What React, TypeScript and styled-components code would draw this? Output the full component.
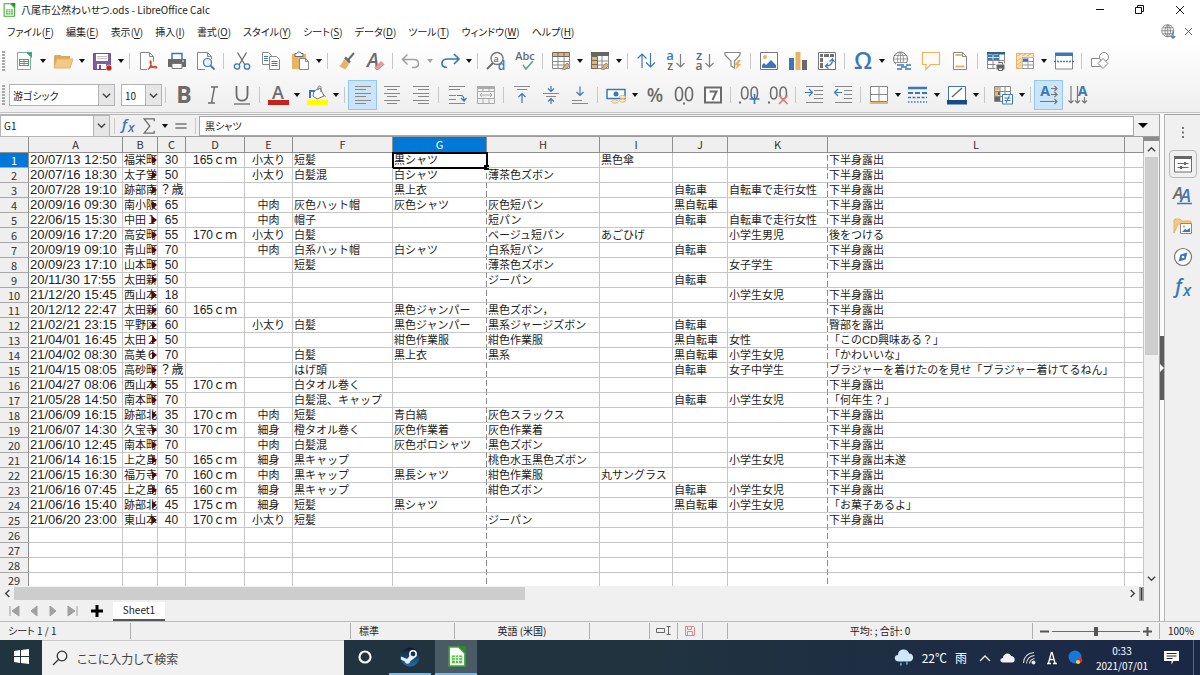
import React from "react";
import styled, { createGlobalStyle, css } from "styled-components";

const UI_FONT = '"Noto Sans CJK JP", "Noto Sans", sans-serif';
const CELL_FONT = '"Liberation Sans", "Noto Sans CJK JP", sans-serif';

const Global = createGlobalStyle`
  * { box-sizing: border-box; }
  html, body { margin: 0; padding: 0; }
  body { font-family: ${UI_FONT}; font-size: 10px; color: #222; background: #f0f0f0; }
  button, input, select { font: inherit; color: inherit; margin: 0; padding: 0; border: 0; background: none; outline: none; }
`;

/* ---------- window frame ---------- */

const Window = styled.div`
  display: flex;
  flex-direction: column;
  height: 100vh;
  overflow: hidden;
  background: #f0f0f0;
  font-feature-settings: "palt";
`;

const Top = styled.header`
  flex: none;
  background: linear-gradient(#fff 0, #fff 42px, #efefef 111px);
  border-bottom: 1px solid #c4c4c4;
`;

const TitleBar = styled.div`
  display: flex;
  align-items: center;
  height: 20px;
  padding-left: 2px;
  gap: 5px;
`;

const Title = styled.h1`
  margin: 0;
  flex: 1;
  font-size: 10px;
  font-weight: 400;
  line-height: 20px;
`;

const CaptionButton = styled.button`
  width: 40px;
  height: 20px;
  margin-left: -5px;
  display: grid;
  place-items: center;
`;

const MenuBar = styled.nav`
  display: flex;
  align-items: center;
  height: 23px;
  padding: 0 4px 0 7px;
  gap: 12px;
`;

const MenuItem = styled.button`
  line-height: 20px;
  white-space: nowrap;
  u { text-underline-offset: 2px; }
`;

const MenuEnd = styled.div`
  display: flex;
  align-items: center;
  gap: 6px;
  margin-left: auto;
  button { display: grid; place-items: center; }
`;

const Toolbar = styled.div<{ $tall?: boolean }>`
  display: flex;
  align-items: center;
  height: ${(p) => (p.$tall ? 34 : 35)}px;
  overflow: hidden;
`;

const Grip = styled.span`
  flex: none;
  width: 3px;
  height: 20px;
  margin: 0 4px 0 2px;
  background: repeating-linear-gradient(#a8a8a8 0 2px, transparent 2px 3px);
`;

const ToolButton = styled.button<{ $active?: boolean }>`
  flex: none;
  display: grid;
  place-items: center;
  width: 29px;
  height: 30px;
  ${(p) =>
    p.$active &&
    css`
      background: #cce4f7;
      border: 1px solid #92c7f0;
    `}
`;

const DropButton = styled.button<{ $muted?: boolean }>`
  flex: none;
  width: 10px;
  height: 30px;
  display: grid;
  place-items: center;
  &::after {
    content: "";
    border: 3px solid transparent;
    border-top: 4px solid ${(p) => (p.$muted ? "#a5a5a5" : "#111")};
    border-bottom: 0;
  }
`;

const Separator = styled.span`
  flex: none;
  width: 1px;
  height: 16px;
  margin: 0 3px;
  background: #c8c8c8;
`;

const Combo = styled.label<{ $width: number; $gap?: number }>`
  flex: none;
  display: flex;
  position: relative;
  width: ${(p) => p.$width}px;
  height: 22px;
  margin-right: ${(p) => p.$gap ?? 0}px;
  border: 1px solid #b4b4b4;
  background: #fff;
  select, input {
    flex: 1;
    min-width: 0;
    appearance: none;
    padding-left: 3px;
  }
`;

const ComboArrow = styled.span`
  flex: none;
  width: 16px;
  display: grid;
  place-items: center;
  background: #e6e6e6;
  border-left: 1px solid #b4b4b4;
  pointer-events: none;
`;

/* ---------- work area ---------- */

const Work = styled.main`
  flex: 1;
  min-height: 0;
  display: flex;
  border-top: 1px solid #f4f4f4;
`;

const Document = styled.section`
  flex: 1;
  min-width: 0;
  display: flex;
  flex-direction: column;
`;

const FormulaBar = styled.div`
  flex: none;
  display: flex;
  align-items: center;
  height: 23px;
  border-top: 1px solid #b4b4b4;
  border-bottom: 1px solid #9c9c9c;
`;

const FormulaTool = styled.button<{ $width: number }>`
  flex: none;
  width: ${(p) => p.$width}px;
  height: 20px;
  display: grid;
  place-items: center;
`;

const FormulaInput = styled.input`
  && {
    flex: 1;
    min-width: 0;
    height: 20px;
    padding-left: 5px;
    border: 1px solid #a8a8a8;
    background: #fff;
  }
`;

const FormulaExpand = styled.button`
  flex: none;
  width: 25px;
  height: 20px;
  padding-left: 4px;
  &::after {
    content: "";
    display: block;
    width: 0;
    border: 5px solid transparent;
    border-top: 5px solid #000;
    border-bottom: 0;
  }
`;

const SheetRow = styled.div`
  flex: 1;
  min-height: 0;
  display: flex;
`;

const SheetView = styled.div`
  flex: 1;
  min-width: 0;
  overflow: hidden;
  background: #fff;
`;

const Grid = styled.table`
  width: 100%;
  table-layout: fixed;
  border-collapse: separate;
  border-spacing: 0;
  font-family: ${CELL_FONT};
  font-feature-settings: normal;
`;

const Col = styled.col<{ $width?: number; $break?: boolean }>`
  ${(p) => p.$width && `width: ${p.$width}px;`}
  ${(p) =>
    p.$break &&
    css`
      background: repeating-linear-gradient(#8a8a8a 0 6px, transparent 6px 9px) right top / 1px 100% no-repeat;
    `}
`;

const headCell = css<{ $selected?: boolean }>`
  padding: 0;
  font-family: ${UI_FONT};
  font-size: 11px;
  font-weight: 400;
  text-align: center;
  color: ${(p) => (p.$selected ? "#fff" : "#333")};
  background: ${(p) => (p.$selected ? "#0078d7" : "#efefef")};
  border-right: 1px solid #8f8f8f;
  border-bottom: 1px solid #8f8f8f;
`;

const ColumnHead = styled.th<{ $selected?: boolean }>`
  ${headCell}
  height: 16px;
  line-height: 15px;
`;

const RowHead = styled.th<{ $selected?: boolean }>`
  ${headCell}
  height: 15px;
  line-height: 14px;
  border-bottom-color: #a8a8a8;
`;

const Cell = styled.td<{ $center?: boolean; $size?: number; $break?: boolean; $current?: boolean }>`
  position: relative;
  height: 15px;
  padding: 0 0 0 ${(p) => (p.$center ? 0 : 1)}px;
  font-size: ${(p) => p.$size ?? 11}px;
  line-height: 14px;
  white-space: nowrap;
  overflow: ${(p) => (p.$current ? "visible" : "hidden")};
  text-align: ${(p) => (p.$center ? "center" : "left")};
  border-right: 1px solid ${(p) => (p.$break ? "transparent" : "#c6c6c6")};
  border-bottom: 1px solid #c6c6c6;
  ${(p) =>
    p.$current &&
    css`
      outline: 2px solid #000;
      outline-offset: -1px;
      &::after {
        content: "";
        position: absolute;
        right: -3px;
        bottom: -3px;
        width: 5px;
        height: 5px;
        background: #000;
      }
    `}
`;

const Overflow = styled.span`
  position: absolute;
  right: 0;
  top: 3px;
  border: 4px solid transparent;
  border-left: 5px solid #4a0a0a;
  border-right: 0;
`;

const VScroll = styled.div`
  flex: none;
  display: flex;
  flex-direction: column;
  align-items: center;
  width: 15px;
  border-top: 4px solid #8c8c8c;
  background: #f0f0f0;
  button { width: 15px; height: 16px; display: grid; place-items: center; }
`;

const VTrack = styled.div`
  flex: 1;
  width: 13px;
`;

const VThumb = styled.div`
  height: 48%;
  background: #cdcdcd;
`;

const HScroll = styled.div`
  flex: none;
  display: flex;
  align-items: center;
  height: 15px;
  padding: 0 15px 0 0;
  background: #f0f0f0;
  button { width: 14px; height: 13px; display: grid; place-items: center; }
`;

const HTrack = styled.div`
  flex: 1;
  height: 13px;
`;

const HThumb = styled.div`
  width: 46%;
  height: 13px;
  background: #cdcdcd;
`;

const SplitHandle = styled.span`
  width: 5px;
  height: 14px;
  border: 1px solid #9a9a9a;
  background: #333;
  border-width: 1px 2px;
`;

const SheetTabs = styled.div`
  flex: none;
  display: flex;
  align-items: center;
  height: 20px;
  padding-left: 5px;
  button { display: grid; place-items: center; width: 19px; height: 19px; }
`;

const SheetTab = styled.button`
  && {
    width: 52px;
    background: #fff;
    border-bottom: 2px solid #555;
    line-height: 16px;
  }
`;

const AddSheet = styled.button`
  && { width: 32px; }
`;

const Splitter = styled.div`
  flex: none;
  width: 6px;
  display: flex;
  flex-direction: column;
  justify-content: center;
  border-left: 1px solid #a2a2a2;
  border-right: 1px solid #b4b4b4;
  background: #fafafa;
`;

const SplitterKnob = styled.button`
  && {
    height: 64px;
    background: #5c5c5c;
    display: grid;
    place-items: center;
  }
`;

const SideBar = styled.aside`
  flex: none;
  width: 35px;
  display: flex;
  flex-direction: column;
  align-items: center;
  gap: 3px;
  padding-top: 2px;
  border-top: 1px solid #a2a2a2;
`;

const SideButton = styled.button<{ $active?: boolean; $first?: boolean }>`
  display: grid;
  place-items: center;
  width: 28px;
  height: ${(p) => (p.$first ? 30 : 28)}px;
  ${(p) =>
    p.$active &&
    css`
      border: 1px solid #b8b8b8;
      border-radius: 4px;
    `}
`;

/* ---------- status bar ---------- */

const StatusBar = styled.footer`
  flex: none;
  display: flex;
  align-items: center;
  height: 19px;
  border-top: 1px solid #bcbcbc;
`;

const StatusField = styled.div<{ $grow?: number; $width?: number; $center?: boolean }>`
  flex: ${(p) => (p.$grow ? `${p.$grow} 1 0` : "none")};
  ${(p) => p.$width && `width: ${p.$width}px;`}
  height: 16px;
  display: flex;
  align-items: center;
  justify-content: ${(p) => (p.$center ? "center" : "flex-start")};
  padding-left: ${(p) => (p.$center ? 0 : 8)}px;
  border-right: 1px solid #b0b0b0;
  line-height: 16px;
  white-space: nowrap;
  &:last-child { border-right: 0; }
`;

const ZoomSlider = styled.input`
  && {
    appearance: none;
    width: 88px;
    height: 12px;
    margin: 0 3px;
    background: linear-gradient(#6a6a6a, #6a6a6a) center / 100% 1px no-repeat;
  }
  &::-webkit-slider-thumb {
    appearance: none;
    width: 4px;
    height: 9px;
    background: #555;
  }
`;

/* ---------- task bar ---------- */

const TaskBar = styled.div`
  flex: none;
  display: flex;
  align-items: stretch;
  height: 35px;
  color: #fff;
  background: linear-gradient(90deg, #20343f 0%, #20333f 55%, #1c2a45 85%, #1b2845 100%);
`;

const TaskButton = styled.button<{ $open?: boolean; $active?: boolean }>`
  flex: none;
  width: 42px;
  display: grid;
  place-items: center;
  background: ${(p) => (p.$active ? "#4b5b65" : "none")};
  border-bottom: 2px solid ${(p) => (p.$open ? "#76b9ed" : "transparent")};
`;

const Running = styled.div`
  display: flex;
  gap: 4px;
  padding-left: 3px;
`;

const SearchBox = styled.label`
  flex: none;
  width: 302px;
  display: flex;
  align-items: center;
  gap: 9px;
  padding-left: 10px;
  background: #f1f1f1;
  border-top: 1px solid #c9c9c9;
  input { flex: 1; min-width: 0; font-size: 12px; color: #333; }
  input::placeholder { color: #444; opacity: 1; }
`;

const Tray = styled.div`
  display: flex;
  align-items: center;
  margin-left: auto;
  padding-right: 3px;
`;

const TrayButton = styled.button<{ $width: number }>`
  flex: none;
  width: ${(p) => p.$width}px;
  height: 35px;
  display: grid;
  place-items: center;
`;

const Weather = styled.button`
  display: flex;
  align-items: center;
  gap: 8px;
  height: 35px;
  margin-right: 7px;
  font-size: 12px;
`;

const Clock = styled.button`
  width: 68px;
  line-height: 15px;
  text-align: center;
  span { display: block; }
`;

const ShowDesktop = styled.button`
  width: 4px;
  height: 35px;
  && { margin-left: 7px; border-left: 1px solid #5a667a; }
`;

/* ---------- drawings ---------- */

const G = "#6b6b6b";
const B = "#3c78b8";
const O = "#e8b464";

type SvgProps = { size?: number; children: React.ReactNode; box?: number };
const Svg = ({ size = 20, box = 20, children }: SvgProps) => (
  <svg width={size} height={size} viewBox={`0 0 ${box} ${box}`} overflow="visible" fill="none" stroke={G} strokeWidth={1} aria-hidden="true">
    {children}
  </svg>
);

type GlyphProps = { x: number; y: number; size: number; fill?: string; weight?: number; italic?: boolean; children: string };
const Glyph = ({ x, y, size, fill = G, weight = 400, italic, children }: GlyphProps) => (
  <text
    x={x}
    y={y}
    fontSize={size}
    fontWeight={weight}
    fill={fill}
    stroke="none"
    textAnchor="middle"
    fontStyle={italic ? "italic" : "normal"}
    fontFamily='"Open Sans", "Noto Sans", sans-serif'
  >
    {children}
  </text>
);

const Chevron = ({ d = "M1 3l4 4 4-4", size = 9 }: { d?: string; size?: number }) => (
  <svg width={size} height={size} viewBox="0 0 10 10" fill="none" stroke="#444" strokeWidth={1.6} aria-hidden="true">
    <path d={d} />
  </svg>
);

const Lines = ({ rows, color = "#888" }: { rows: [number, number, number][]; color?: string }) => (
  <path d={rows.map(([x1, x2, y]) => `M${x1} ${y}H${x2}`).join("")} stroke={color} />
);

const icons: Record<string, React.ReactNode> = {
  new: (<><path d="M3.5 1.500h9l4 4v13h-13z" fill="#fff" stroke="#7fae98" /><path d="M12 1h6v6z" fill="#4d9c86" stroke="none" /><path d="M5 8h10v7H5z" fill="#5b9a7c" stroke="none" /><path d="M6 9.500h3.500M10.500 9.500h3.500M6 11.500h3.500M10.500 11.500h3.500M6 13.500h3.500M10.500 13.500h3.500" stroke="#fff" /></>),
  open: (<><path d="M1 16V5l1-1h5l2 1h8v3H5z" fill="#d9a962" stroke="none" /><path d="M1 17L4 8h16l-3 9z" fill="#f2c987" stroke="#e4b469" /></>),
  save: (<><path d="M1.500 2.500h17v16h-17z" fill="#7a62a0" stroke="#6a5290" /><path d="M4 3h12v7H4z" fill="#fff" stroke="none" /><path d="M5 5.500h10M5 7.500h10" stroke="#c9c0d9" /><path d="M5 13h9v5H5z" fill="#fff" stroke="none" /><path d="M7 14h2v4H7z" fill="#6a5290" stroke="none" /><circle cx="17" cy="17" r="3" fill="#c9211e" stroke="#fff" strokeWidth=".6" /></>),
  pdf: (<><path d="M9 18.500H2.500v-17h9l4 4v5" fill="#fff" stroke="#888" /><path d="M11.500 1.500v4h4" stroke="#888" /><path d="M10 18.500c2-2 3.500-5 3-8-.5-1.500-1.500 0-.5 2.500s3 4 5.500 4c1.500 0 1-2-2-1.500s-5 1.500-6 3z" stroke="#d0472c" strokeWidth="1.200" /></>),
  print: (<><path d="M5 8V2.500h10V8" fill="#fff" stroke={B} strokeWidth="1.500" /><path d="M1 8h18v8H1z" fill="#6a6a6a" stroke="none" /><path d="M5 12.500h10v5H5z" fill="#fff" stroke="#777" /><path d="M15 10h2" stroke="#fff" /></>),
  preview: (<><path d="M9 18.500H1.500v-17h10l4 4V8" fill="#fff" stroke="#888" /><path d="M11.500 1.500v4h4" stroke="#888" /><circle cx="11.500" cy="11.500" r="4" fill="#eaf2fa" stroke={B} strokeWidth="1.200" /><path d="M14.500 14.500l4 4" stroke={B} strokeWidth="1.800" /></>),
  cut: (<><path d="M5.500 1.500L13 14M14.500 1.500L7 14" strokeWidth="1.300" /><circle cx="5" cy="15.500" r="2.700" stroke={B} strokeWidth="1.300" /><circle cx="15" cy="15.500" r="2.700" stroke={B} strokeWidth="1.300" /></>),
  copy: (<><path d="M1.500 1.500h6l3 3v9h-9z" fill="#fff" stroke="#888" /><path d="M3 5.500h4M3 7.500h4M3 9.500h4" stroke={B} /><path d="M8.500 5.500h7l3 3v10h-10z" fill="#fff" stroke="#888" /><path d="M10.500 10.500h6M10.500 12.500h6M10.500 14.500h6" stroke={B} /></>),
  paste: (<><path d="M2 3h14v15H2z" fill={O} stroke="none" /><path d="M5 2.500h2l1-1.500h2l1 1.500h2v3H5z" fill="#fff" stroke={G} /><path d="M9.500 7.500h6l3 3v8h-9z" fill="#fff" stroke="#888" /><path d="M15.500 7.500v3h3" stroke="#888" /></>),
  brush: (<><path d="M18 2l-6 7" strokeWidth="2" /><path d="M9 6.500l5 5" strokeWidth="2.500" /><path d="M8 8l5 4.500c-1 3-3 5-4 6L3 15c2-1 4-4 5-7z" fill={O} stroke="none" /></>),
  clear: (<><Glyph x={8} y={16} size={20} weight={600} italic>A</Glyph><path d="M10 16.500l6-6 3 3-6 5h-2z" fill="#e79a9e" stroke="#d88" /></>),
  undo: (<path d="M6.500 3.500l-5 5 5 5M2 8.500h11c6 0 6 8 0 8h-2" stroke="#a0a0a0" strokeWidth="1.500" />),
  redo: (<path d="M14 3l5 5-5 5M18 8H8c-8 0-8 8.500-1 8.500" stroke={B} strokeWidth="1.700" />),
  find: (<><circle cx="11" cy="7.500" r="6" stroke="#777" strokeWidth="1.400" /><path d="M7 12l-6 6" strokeWidth="2" /><Glyph x={10} y={10.500} size={9} weight={600}>a</Glyph><Glyph x={15.500} y={19} size={12} weight={600} fill={B}>d</Glyph></>),
  spell: (<><Glyph x={10} y={9} size={11} weight={600}>Abc</Glyph><path d="M8 14l3 4 7-8" stroke="#5aa583" strokeWidth="1.600" /></>),
  rows: (<><path d="M1.500 2.500h17v15h-17zM1.500 10.500h17M1.500 14h17M7 6v11.500M13 6v11.500" fill="#fff" stroke="#8a8a8a" /><path d="M1.500 1.500h17v4h-17z" fill={O} stroke={G} /><path d="M7 2v3M13 2v3" stroke={G} /><path d="M11 18l5-6 3 2.500-5 4z" fill={O} stroke="#888" /></>),
  cols: (<><path d="M1.500 2.500h17v15h-17zM12 2.500v15M1.500 10h17M1.500 14h17" fill="#fff" stroke="#8a8a8a" /><path d="M1 1h18v4H1z" fill="#666" stroke="none" /><path d="M1.500 5.500h6v4h-6zM1.500 9.500h6v4h-6zM1.500 13.500h6v4h-6z" fill={O} /><path d="M11 18l5-6 3 2.500-5 4z" fill={O} stroke="#888" /></>),
  sort: (<path d="M6 17V3M1.500 7.500L6 3l4.500 4.500M14.500 2v14M10 11.500l4.500 4.500 4.500-4.500" stroke={B} strokeWidth="1.200" />),
  az: (<><Glyph x={5} y={9} size={13} weight={600} fill={B}>a</Glyph><Glyph x={5} y={19} size={12} weight={600}>z</Glyph><path d="M15.500 3v13M11.500 12l4 4 4-4" stroke="#808080" strokeWidth="1.200" /></>),
  za: (<><Glyph x={5} y={9} size={13} weight={600} fill={B}>z</Glyph><Glyph x={5} y={19} size={12} weight={600}>a</Glyph><path d="M15.500 3v13M11.500 12l4 4 4-4" stroke="#808080" strokeWidth="1.200" /></>),
  filter: (<><path d="M2 1.500h15v2.500l-5.500 6v7l-3.500-2V10L2 4z" fill="#fff" stroke="#888" strokeWidth="1.200" /><path d="M15 9l-4 5.500h3L12 19l6.500-6h-3L18 9z" fill={O} stroke="none" /></>),
  image: (<><path d="M1.500 1.500h17v17h-17z" fill="#fff" stroke="#777" /><circle cx="6" cy="6" r="2" fill={O} stroke="none" /><path d="M3 17v-3l2-2 2 2 5-5 5 5v3z" fill={B} stroke="none" /></>),
  chart: (<><path d="M1 7h5v12H1z" fill={B} stroke="none" /><path d="M7.500 1h5v18h-5z" fill={O} stroke="none" /><path d="M14 9h5v10h-5z" fill={G} stroke="none" /></>),
  pivot: (<><path d="M1.500 1.500h17v17h-17z" fill="#fff" stroke="#777" /><path d="M3 3h3v3H3zM7 3h5v3H7zM13 3h4v3h-4zM3 7h3v4H3zM3 12h3v5H3z" fill="#707070" stroke="none" /><path d="M8.500 15c5 0 7-2 7-6M12.500 10.500l3-2.500 2 3M11 12.500l-2.500 2.500 3 2.500" stroke={B} strokeWidth="1.200" /></>),
  omega: (<Glyph x={10} y={18} size={23} weight={600} fill={B}>Ω</Glyph>),
  link: (<><circle cx="8.500" cy="8" r="7" stroke="#777" /><path d="M2 8h13M3 4.500h11M3 11.500h11M8.500 1v14M8.500 1c-4 3-4 11 0 14M8.500 1c4 3 4 11 0 14" stroke="#888" strokeWidth=".8" /><path d="M4 12h16v8H4z" fill="#f6f6f6" stroke="none" /><path d="M5 14h5l2 0M14 14h5M5 18h5M13 18h6M9 16h6" stroke={B} strokeWidth="1.600" /></>),
  comment: (<path d="M1.500 1.500h17v12h-9l-4.500 5v-5H1.500z" fill="#fffaf2" stroke={O} strokeWidth="1.200" />),
  headfoot: (<><path d="M3.500 1.500h9l4 4v13h-13z" fill="#fff" stroke="#888" /><path d="M12.500 1.500v4h4" stroke="#888" /><path d="M5.500 4h6M5.500 15.500h9" stroke={O} strokeWidth="2" /></>),
  printarea: (<><path d="M1.500 1.500h17v16h-17zM7 1.500v16M13 1.500v16M1.500 9.500h17M1.500 13.500h17" fill="#fff" stroke="#888" /><path d="M1 1h18v2.500H1z" fill="#315f92" stroke="none" /><path d="M2 4h11v5H2z" fill={B} stroke="none" /><path d="M2 6.500h11M7 4v5" stroke="#cfe0f1" /><path d="M10 13h9v6h-9z" fill="#666" stroke="#fff" /><path d="M12.500 11.500h4v2M12.500 17h4v2.500h-4z" stroke="#666" fill="#fff" /></>),
  freeze: (<><path d="M1.500 2.500h17v15h-17zM7 2.500v15M13 6v11.500M1.500 10.500h17M1.500 14h17" fill="#fff" stroke="#999" /><path d="M1.500 2.500h17v4H7v11H1.500z" fill="#fbe6c4" stroke={O} /><path d="M2 5l4-2M7 5l4-2M12 5l4-2M2 10l4-3M2 14l4-3M2 17l4-3" stroke={O} /><path d="M8 7.500h5v3H8z" fill={B} stroke="none" /></>),
  split: (<><path d="M1.500 2.500h17v15.500h-17z" fill="#fff" stroke="#888" /><path d="M1 1.500h18v3.500H1z" fill={B} stroke="none" /><path d="M0 10.500h20" stroke={B} strokeDasharray="2 1" strokeWidth="1.300" /></>),
  shapes: (<><path d="M1.500 7.500h9v8h-9z" fill="#fff" stroke="#888" /><circle cx="14" cy="6" r="4.500" fill="#fff" stroke="#888" /><path d="M13 7.500l5 5-5 5-5-5z" fill="#fff" stroke="#888" /></>),
  bold: (<Glyph x={10} y={18} size={23} weight={700}>B</Glyph>),
  italic: (<path d="M8 2h7M5 18h7M11.500 2L8.500 18" strokeWidth="1.400" />),
  underline: (<><path d="M4.500 1v9c0 7.500 11 7.500 11 0V1" strokeWidth="1.800" /><path d="M2 19h16" strokeWidth="1.300" /></>),
  fontcolor: (<><Glyph x={10} y={14} size={18} weight={600}>A</Glyph><path d="M0 15h21v5H0z" fill="#c9211e" stroke="none" /></>),
  highlight: (<><path d="M7 6l6-3 4 8-7 3-4-3z" fill="#fff" stroke="#777" /><path d="M11 5V2.500c0-2 3-2 3 0V7M16 9l2.500 3" stroke="#777" /><path d="M8 6H3v7" stroke={B} strokeWidth="2" /><path d="M0 15h21v5H0z" fill="#ffff00" stroke="none" /></>),
  left: (<Lines rows={[[2, 18, 1.5], [2, 13, 4.5], [2, 18, 8.5], [2, 13, 11.5], [2, 18, 15.5], [2, 13, 18.5]]} />),
  center: (<Lines rows={[[2, 18, 1.5], [5, 15, 4.5], [2, 18, 8.5], [5, 15, 11.5], [2, 18, 15.5], [5, 15, 18.5]]} />),
  right: (<Lines rows={[[2, 18, 1.5], [7, 18, 4.5], [2, 18, 8.5], [7, 18, 11.5], [2, 18, 15.5], [7, 18, 18.5]]} />),
  wrap: (<><Lines rows={[[2, 18, 1.5], [2, 13, 4.5], [2, 9, 10.5], [2, 9, 14.5], [2, 18, 18.5]]} /><path d="M10 10.500h4c2 0 3 2 3 5M14 13l3 3 2.500-3" stroke={B} strokeWidth="1.200" /></>),
  merge: (<><path d="M1.500 1.500h17v17h-17zM7 1.500v5M13 1.500v5M7 13v5.500M13 13v5.500M1.500 6.500h17M1.500 13.500h17" stroke="#aaa" /><path d="M1 1h18v3H1z" fill="#aaa" stroke="none" /><path d="M4 10h12M6 8l-2 2 2 2M14 8l2 2-2 2" stroke="#aaa" /></>),
  top: (<><Lines rows={[[2, 18, 1.5], [5, 15, 4.5]]} /><path d="M10 18V9M6.500 12L10 8.500l3.500 3.500" stroke={B} strokeWidth="1.200" /></>),
  middle: (<><Lines rows={[[2, 18, 8.5], [5, 15, 11.5]]} /><path d="M10 1v5.500M7 3.500l3 3 3-3M10 19v-5.500M7 16.500l3-3 3 3" stroke={B} strokeWidth="1.200" /></>),
  bottom: (<><Lines rows={[[2, 12, 15.5], [2, 18, 18.5]]} /><path d="M10 1.500V10M6.500 7l3.500 3.500L13.500 7" stroke={B} strokeWidth="1.200" /></>),
  currency: (<><path d="M1 4.500h18v9H1z" fill="#fff" stroke={B} strokeWidth="1.500" /><circle cx="10" cy="9" r="2.500" fill={B} stroke="none" /><ellipse cx="16.500" cy="12" rx="3" ry="1.500" fill="#fdeccf" stroke={O} /><ellipse cx="16.500" cy="15.500" rx="3" ry="1.500" fill="#fdeccf" stroke={O} /><ellipse cx="9" cy="16.500" rx="3.500" ry="1.700" fill="#fdeccf" stroke={O} /></>),
  percent: (<Glyph x={10} y={17} size={19} weight={600}>%</Glyph>),
  number: (<><path d="M1.500 9c0-9 7-9 7 0s-7 9-7 0zM11.500 9c0-9 7-9 7 0s-7 9-7 0z" strokeWidth="1.700" /><path d="M9 18.500h2" strokeWidth="2" /></>),
  date: (<><path d="M2 2.500h16v15H2z" fill="#fff" strokeWidth="2" /><path d="M6.500 6.500h7l-4 8.500" strokeWidth="2" /></>),
  adddec: (<><path d="M2.500 8c0-8 6.500-8 6.500 0s-6.500 8-6.500 0zM12 8c0-8 6.500-8 6.500 0s-6.500 8-6.500 0z" strokeWidth="1.500" /><path d="M0 17.500h2" strokeWidth="2" /><path d="M15.500 9v10M10.500 14h10" stroke={B} strokeWidth="1.600" /></>),
  deldec: (<><path d="M2.500 8c0-8 6.500-8 6.500 0s-6.500 8-6.500 0zM12 8c0-8 6.500-8 6.500 0s-6.500 8-6.500 0z" strokeWidth="1.500" /><path d="M0 17.500h2" strokeWidth="2" /><path d="M11 10.500l8.500 8.500M19.500 10.500L11 19" stroke="#e07a76" strokeWidth="1.600" /></>),
  indent: (<><Lines rows={[[2, 19, 1.5], [10, 19, 5.5], [10, 19, 9.5], [10, 19, 13.5], [2, 19, 17.5]]} /><path d="M1 7.500h7M5 4l3.500 3.500L5 11" stroke={B} strokeWidth="1.200" /></>),
  outdent: (<><Lines rows={[[2, 19, 1.5], [11, 19, 5.5], [11, 19, 9.5], [11, 19, 13.5], [2, 19, 17.5]]} /><path d="M9 7.500H2M5 4L1.500 7.500 5 11" stroke={B} strokeWidth="1.200" /></>),
  borders: (<><path d="M1.500 1.500h17v15h-17zM10 1.500v15M1.500 9.500h17" fill="#fff" stroke="#888" /><path d="M1 18h18" stroke={O} strokeWidth="2" /></>),
  linestyle: (<><path d="M0 3h19" stroke={B} strokeWidth="2.500" /><path d="M0 8h19" stroke={B} strokeWidth="2" strokeDasharray="5 2" /><path d="M0 12.500h19" stroke={B} strokeWidth="1.500" strokeDasharray="3 1.500" /><path d="M0 17h19" stroke={B} strokeWidth="1.500" strokeDasharray="1.500 1.500" /></>),
  linecolor: (<><path d="M1.500 1.500h17v14h-17z" fill="#fff" stroke={B} /><path d="M5 12L15 3" strokeWidth="1.500" /><path d="M0 15h20v4.500H0z" fill="#174a86" stroke="none" /></>),
  cond: (<><path d="M1.500 1.500h16v15h-16zM7 1.500v15M12 1.500v8M1.500 6.500h16M1.500 11.500h9" fill="#fff" stroke="#888" /><path d="M2 2h5v3.500H2zM2 7h3.500v4H2z" fill={O} stroke="none" /><path d="M5 7h2v3H5zM2 12h5v4H2z" fill="#666" stroke="none" /><path d="M9.500 9.500h10v9.500h-10z" fill="#fff" stroke={B} /><path d="M11.500 13h6M11.500 15.500h6M16.500 10.500L13 18" stroke={B} /></>),
  ltr: (<><Glyph x={6} y={11} size={14} weight={700} fill={B}>A</Glyph><path d="M12 3.500h6M15.500 1L18 3.500 15.500 6M12 9.500h6M15.500 7L18 9.500 15.500 12M1 16.500h17M15.500 14l2.500 2.500-2.500 2.500" stroke="#777" strokeWidth="1.200" /></>),
  ttb: (<><Glyph x={14.5} y={11} size={14} weight={700} fill={B}>A</Glyph><path d="M3 1v17M.5 15.500L3 18l2.500-2.500M9.500 1v17M7 15.500l2.500 2.500 2.500-2.500M16.500 12v6M14 15.500l2.500 2.500 2.500-2.500" stroke="#777" strokeWidth="1.200" /></>),
  dots: (<path d="M10 5v2M10 9.500v2M10 14v2" stroke="#777" strokeWidth="2" />),
  properties: (<><path d="M1.500 2.500h17v15.500h-17z" fill="#fff" /><path d="M1 2h18v3H1z" fill="#666" stroke="none" /><path d="M4.500 9.500h11M4.500 13.500h11" strokeWidth="1.200" /><path d="M12 8v3M8 12v3" strokeWidth="2" /></>),
  styles: (<><Glyph x={5} y={14} size={17} weight={600} italic>A</Glyph><Glyph x={12.5} y={17} size={18} weight={600} fill={B} italic>A</Glyph><path d="M4 18.500h15" stroke={B} strokeWidth="1.500" /></>),
  gallery: (<><path d="M1 17V4l1-1h5l2 2h9v3H5L1 17z" fill="#f2c987" stroke={O} /><path d="M7.500 7.500h11v10h-11z" fill="#fff" stroke="#888" /><path d="M9 16l3-3 2 1 3-2v4z" fill={B} stroke="none" /><circle cx="11" cy="10.500" r="1.200" fill={O} stroke="none" /></>),
  navigator: (<><circle cx="10" cy="10" r="8.500" fill="#fff" stroke="#777" strokeWidth="1.200" /><path d="M14.500 5.500l-2 7-7 2 2-7z" fill={B} stroke="none" /><circle cx="10" cy="10" r="1.300" fill="#fff" stroke="none" /></>),
  fx: (<><Glyph x={5.500} y={15} size={19} weight={600} fill={B} italic>f</Glyph><Glyph x={14} y={18} size={16} weight={600} fill={B} italic>x</Glyph></>),
  sigma: (<path d="M16.500 4V1H4l7 9-7 9h12.500v-3" strokeWidth="1.600" />),
  equals: (<path d="M3 7.500h14M3 12.500h14" stroke="#777" strokeWidth="2" />),
};

const CalcLogo = ({ size }: { size: number }) => (
  <Svg size={size}>
    <path d="M3 1h9l6 6v12H3z" fill="#fff" stroke="#3fa535" strokeWidth="1.500" />
    <path d="M12 0h7v7z" fill="#2f8a2a" stroke="none" />
    <path d="M5.500 9h10v7.500h-10z" fill="#5cbf4c" stroke="none" />
    <path d="M6 11h9M6 13.500h9M9 9v7.500M12 9v7.500" stroke="#fff" strokeWidth=".8" />
  </Svg>
);

/* ---------- toolbars ---------- */

type Item = { icon: string; label: string; drop?: boolean; muted?: boolean; active?: boolean } | "|";
const i = (icon: string, label: string, extra: object = {}): Item => ({ icon, label, ...extra });
const drop = { drop: true };

const standardTools: Item[] = [
  i("new", "新規", drop), i("open", "開く", drop), i("save", "保存", drop), "|",
  i("pdf", "PDF"), i("print", "印刷"), i("preview", "印刷プレビュー"), "|",
  i("cut", "切り取り"), i("copy", "コピー"), i("paste", "貼り付け", drop), "|",
  i("brush", "書式のコピー"), i("clear", "書式のクリア"), "|",
  i("undo", "元に戻す", { drop: true, muted: true }), i("redo", "やり直し", drop), "|",
  i("find", "検索と置換"), i("spell", "スペルチェック"), "|",
  i("rows", "行", drop), i("cols", "列", drop), "|",
  i("sort", "並べ替え"), i("az", "昇順"), i("za", "降順"), i("filter", "オートフィルター"), "|",
  i("image", "画像"), i("chart", "グラフ"), i("pivot", "ピボットテーブル"), "|",
  i("omega", "特殊文字", drop), i("link", "ハイパーリンク"), i("comment", "コメント"), i("headfoot", "ヘッダーとフッター"), "|",
  i("printarea", "印刷範囲"), i("freeze", "行と列の固定", drop), i("split", "分割"), "|",
  i("shapes", "図形描画"),
];

const formatTools: Item[] = [
  i("bold", "太字"), i("italic", "斜体"), i("underline", "下線"), "|",
  i("fontcolor", "文字色", drop), i("highlight", "背景色", drop), "|",
  i("left", "左揃え", { active: true }), i("center", "中央揃え"), i("right", "右揃え"), "|",
  i("wrap", "折り返し"), i("merge", "セルの結合"), "|",
  i("top", "上揃え"), i("middle", "上下中央"), i("bottom", "下揃え"), "|",
  i("currency", "通貨", drop), i("percent", "パーセント"), i("number", "数値"), i("date", "日付"), "|",
  i("adddec", "小数点以下を追加"), i("deldec", "小数点以下を削除"), "|",
  i("indent", "インデントを増やす"), i("outdent", "インデントを減らす"), "|",
  i("borders", "罫線", drop), i("linestyle", "線種", drop), i("linecolor", "線の色", drop), "|",
  i("cond", "条件付き書式", drop), "|",
  i("ltr", "左から右へ", { active: true }), i("ttb", "上から下へ"),
];

const Tools = ({ items }: { items: Item[] }) => (
  <>
    {items.map((item, n) =>
      item === "|" ? (
        <Separator key={n} />
      ) : (
        <React.Fragment key={n}>
          <ToolButton $active={item.active} aria-label={item.label}>
            <Svg>{icons[item.icon]}</Svg>
          </ToolButton>
          {item.drop && <DropButton $muted={item.muted} aria-label={`${item.label} ▾`} />}
        </React.Fragment>
      )
    )}
  </>
);

const menus: [string, string][] = [
  ["ファイル", "F"], ["編集", "E"], ["表示", "V"], ["挿入", "I"], ["書式", "O"], ["スタイル", "Y"],
  ["シート", "S"], ["データ", "D"], ["ツール", "T"], ["ウィンドウ", "W"], ["ヘルプ", "H"],
];

/* ---------- sheet data ---------- */

const columns: { name: string; width: number; center?: boolean; size?: number; pageBreak?: boolean }[] = [
  { name: "A", width: 94, size: 13 },
  { name: "B", width: 35 },
  { name: "C", width: 28, center: true, size: 12 },
  { name: "D", width: 59, center: true, size: 12 },
  { name: "E", width: 48, center: true },
  { name: "F", width: 100 },
  { name: "G", width: 94, pageBreak: true },
  { name: "H", width: 113 },
  { name: "I", width: 73 },
  { name: "J", width: 55 },
  { name: "K", width: 100, pageBreak: true },
  { name: "L", width: 297 },
];

const rows: string[][] = [
  ["20/07/13 12:50", "福栄町", "30", "165ｃｍ", "小太り", "短髪", "黒シャツ", "", "黒色傘", "", "", "下半身露出"],
  ["20/07/16 18:30", "太子堂", "50", "", "小太り", "白髪混", "白シャツ", "薄茶色ズボン", "", "", "", "下半身露出"],
  ["20/07/28 19:10", "跡部南", "？歳", "", "", "", "黒上衣", "", "", "自転車", "自転車で走行女性", "下半身露出"],
  ["20/09/16 09:30", "南小阪", "65", "", "中肉", "灰色ハット帽", "灰色シャツ", "灰色短パン", "", "黒自転車", "", "下半身露出"],
  ["22/06/15 15:30", "中田１", "65", "", "中肉", "帽子", "", "短パン", "", "自転車", "自転車で走行女性", "下半身露出"],
  ["20/09/16 17:20", "高安町", "55", "170ｃｍ", "小太り", "白髪", "", "ベージュ短パン", "あごひげ", "", "小学生男児", "後をつける"],
  ["20/09/19 09:10", "青山町", "70", "", "中肉", "白系ハット帽", "白シャツ", "白系短パン", "", "自転車", "", "下半身露出"],
  ["20/09/23 17:10", "山本町", "50", "", "", "短髪", "", "薄茶色ズボン", "", "", "女子学生", "下半身露出"],
  ["20/11/30 17:55", "太田新", "50", "", "", "", "", "ジーパン", "", "自転車", "", ""],
  ["21/12/20 15:45", "西山本", "18", "", "", "", "", "", "", "", "小学生女児", "下半身露出"],
  ["20/12/12 22:47", "太田新", "60", "165ｃｍ", "", "", "黒色ジャンパー", "黒色ズボン，", "", "", "", "下半身露出"],
  ["21/02/21 23:15", "平野区", "60", "", "小太り", "白髪", "黒色ジャンパー", "黒系ジャージズボン", "", "自転車", "", "臀部を露出"],
  ["21/04/01 16:45", "太田２", "50", "", "", "", "紺色作業服", "紺色作業服", "", "黒自転車", "女性", "「このCD興味ある？」"],
  ["21/04/02 08:30", "高美６", "70", "", "", "白髪", "黒上衣", "黒系", "", "黒自転車", "小学生女児", "「かわいいな」"],
  ["21/04/15 08:05", "高砂町", "？歳", "", "", "はげ頭", "", "", "", "自転車", "女子中学生", "ブラジャーを着けたのを見せ「ブラジャー着けてるねん」"],
  ["21/04/27 08:06", "西山本", "55", "170ｃｍ", "", "白タオル巻く", "", "", "", "", "", "下半身露出"],
  ["21/05/28 14:50", "南本町", "70", "", "", "白髪混、キャップ", "", "", "", "自転車", "小学生女児", "「何年生？」"],
  ["21/06/09 16:15", "跡部北", "35", "170ｃｍ", "中肉", "短髪", "青白縞", "灰色スラックス", "", "", "", "下半身露出"],
  ["21/06/07 14:30", "久宝寺", "30", "170ｃｍ", "細身", "橙タオル巻く", "灰色作業着", "灰色作業着", "", "", "", "下半身露出"],
  ["21/06/10 12:45", "南本町", "70", "", "中肉", "白髪混", "灰色ポロシャツ", "黒色ズボン", "", "", "", "下半身露出"],
  ["21/06/14 16:15", "上之島", "50", "165ｃｍ", "細身", "黒キャップ", "", "桃色水玉黒色ズボン", "", "", "小学生女児", "下半身露出未遂"],
  ["21/06/15 16:30", "福万寺", "70", "160ｃｍ", "中肉", "黒キャップ", "黒長シャツ", "紺色作業服", "丸サングラス", "", "", "下半身露出"],
  ["21/06/16 07:45", "上之島", "65", "160ｃｍ", "細身", "黒キャップ", "", "紺色ズボン", "", "自転車", "小学生女児", "下半身露出"],
  ["21/06/16 15:40", "跡部北", "45", "175ｃｍ", "細身", "短髪", "黒シャツ", "", "", "黒自転車", "小学生女児", "「お菓子あるよ」"],
  ["21/06/20 23:00", "東山本", "40", "170ｃｍ", "小太り", "短髪", "", "ジーパン", "", "", "", "下半身露出"],
  [], [], [], [],
];

const Sheet = () => (
  <SheetView>
    <Grid>
      <colgroup>
        <Col $width={29} />
        {columns.map((c) => (
          <Col key={c.name} $width={c.width} $break={c.pageBreak} />
        ))}
        <Col />
      </colgroup>
      <thead>
        <tr>
          <ColumnHead />
          {columns.map((c) => (
            <ColumnHead key={c.name} scope="col" $selected={c.name === "G"}>{c.name}</ColumnHead>
          ))}
          <ColumnHead />
        </tr>
      </thead>
      <tbody>
        {rows.map((row, r) => (
          <tr key={r}>
            <RowHead scope="row" $selected={r === 0}>{r + 1}</RowHead>
            {columns.map((c, n) => (
              <Cell
                key={c.name}
                $center={c.center}
                $size={c.size}
                $break={c.pageBreak}
                $current={r === 0 && c.name === "G"}
              >
                {row[n]}
                {c.name === "B" && row[n] && <Overflow />}
              </Cell>
            ))}
            <Cell />
          </tr>
        ))}
      </tbody>
    </Grid>
  </SheetView>
);

/* ---------- page ---------- */

const navGlyphs: [string, string][] = [
  ["最初のシート", "M2 2v10M11 2v10L4 7z"],
  ["前のシート", "M10 2v10L4 7z"],
  ["次のシート", "M4 2v10l6-5z"],
  ["最後のシート", "M3 2v10l7-5zM12 2v10"],
];

const sideTools: [string, string][] = [
  ["properties", "プロパティ"], ["styles", "スタイル"], ["gallery", "ギャラリー"], ["navigator", "ナビゲーター"], ["fx", "関数"],
];

export default function App() {
  return (
    <Window>
      <Global />
      <Top>
        <TitleBar>
          <CalcLogo size={14} />
          <Title>八尾市公然わいせつ.ods - LibreOffice Calc</Title>
          <CaptionButton aria-label="最小化">
            <svg width="10" height="10" stroke="#111"><path d="M1 4.500h8" /></svg>
          </CaptionButton>
          <CaptionButton aria-label="元に戻す">
            <svg width="10" height="10" stroke="#111" fill="none"><path d="M.5 2.500h6v6h-6zM2.500 2.500v-2h6v6h-2" /></svg>
          </CaptionButton>
          <CaptionButton aria-label="閉じる">
            <svg width="10" height="10" stroke="#111"><path d="M1 1l8 8M9 1L1 9" /></svg>
          </CaptionButton>
        </TitleBar>
        <MenuBar>
          {menus.map(([name, key]) => (
            <MenuItem key={key}>{name}(<u>{key}</u>)</MenuItem>
          ))}
          <MenuEnd>
            <button aria-label="更新">
              <Svg size={15}>
                <circle cx="9" cy="9" r="8" /><path d="M1 9h16M2.500 5h13M2.500 13h13M9 1v16M9 1c-5 4-5 12 0 16M9 1c5 4 5 12 0 16" />
                <path d="M16 10v9M13 16l3 3 3-3" stroke={B} strokeWidth="1.600" />
              </Svg>
            </button>
            <button aria-label="文書を閉じる">
              <svg width="14" height="10" stroke="#555"><path d="M3 1l7 7M10 1L3 8" /></svg>
            </button>
          </MenuEnd>
        </MenuBar>
        <Toolbar><Grip /><Tools items={standardTools} /></Toolbar>
        <Toolbar $tall>
          <Grip />
          <Combo $width={106} $gap={6}>
            <select aria-label="フォント名"><option>游ゴシック</option></select>
            <ComboArrow><Chevron /></ComboArrow>
          </Combo>
          <Combo $width={41}>
            <select aria-label="フォントサイズ"><option>10</option></select>
            <ComboArrow><Chevron /></ComboArrow>
          </Combo>
          <Separator />
          <Tools items={formatTools} />
        </Toolbar>
      </Top>

      <Work>
        <Document>
          <FormulaBar>
            <Combo $width={110} $gap={1}>
              <input aria-label="名前ボックス" defaultValue="G1" />
              <ComboArrow><Chevron /></ComboArrow>
            </Combo>
            <Separator />
            <FormulaTool $width={20} aria-label="関数ウィザード"><Svg size={16}>{icons.fx}</Svg></FormulaTool>
            <FormulaTool $width={22} aria-label="合計"><Svg size={16}>{icons.sigma}</Svg></FormulaTool>
            <DropButton aria-label="関数を選択" />
            <FormulaTool $width={22} aria-label="数式"><Svg size={16}>{icons.equals}</Svg></FormulaTool>
            <Separator />
            <FormulaInput aria-label="入力行" defaultValue="黒シャツ" />
            <FormulaExpand aria-label="数式バーの展開" />
          </FormulaBar>
          <SheetRow>
            <Sheet />
            <VScroll>
              <button aria-label="上へ"><Chevron d="M1 7l4-4 4 4" /></button>
              <VTrack><VThumb /></VTrack>
              <button aria-label="下へ"><Chevron /></button>
            </VScroll>
          </SheetRow>
          <HScroll>
            <button aria-label="左へ"><Chevron d="M7 1L3 5l4 4" /></button>
            <HTrack><HThumb /></HTrack>
            <button aria-label="右へ"><Chevron d="M3 1l4 4-4 4" /></button>
            <SplitHandle />
          </HScroll>
          <SheetTabs>
            {navGlyphs.map(([label, d]) => (
              <button key={label} aria-label={label}>
                <svg width="14" height="14" fill="#a0a0a0" stroke="#a0a0a0"><path d={d} /></svg>
              </button>
            ))}
            <AddSheet aria-label="シートの追加">
              <svg width="12" height="12" stroke="#000" strokeWidth="3"><path d="M6 0v12M0 6h12" /></svg>
            </AddSheet>
            <SheetTab>Sheet1</SheetTab>
          </SheetTabs>
        </Document>
        <Splitter>
          <SplitterKnob aria-label="サイドバー">
            <svg width="4" height="8" fill="#fff"><path d="M0 0l4 4-4 4z" /></svg>
          </SplitterKnob>
        </Splitter>
        <SideBar>
          <SideButton $first aria-label="サイドバーの設定"><Svg>{icons.dots}</Svg></SideButton>
          {sideTools.map(([icon, label], n) => (
            <SideButton key={icon} $active={n === 0} aria-label={label}><Svg>{icons[icon]}</Svg></SideButton>
          ))}
        </SideBar>
      </Work>

      <StatusBar>
        <StatusField $width={131}>シート 1 / 1</StatusField>
        <StatusField $width={220} />
        <StatusField $width={104}>標準</StatusField>
        <StatusField $width={135} $center>英語 (米国)</StatusField>
        <StatusField $width={60} />
        <StatusField $width={28} $center>
          <svg width="16" height="10" fill="none" stroke="#666"><path d="M.5 2.500h8v4h-8zM10.500.500h4M10.500 8.500h4M12.500.500v8" /></svg>
        </StatusField>
        <StatusField $width={25} $center>
          <svg width="10" height="10" fill="none" stroke="#dd8a88"><path d="M.5.500h8l1 1v8h-9zM2.500.500v3h4v-3M2.500 9.500v-4h5v4" /></svg>
        </StatusField>
        <StatusField $width={25} />
        <StatusField $grow={1} $center>平均: ; 合計: 0</StatusField>
        <StatusField $width={127} $center>
          <svg width="9" height="9" stroke="#555" strokeWidth="2"><path d="M0 4.500h9" /></svg>
          <ZoomSlider type="range" min={0} max={200} defaultValue={100} aria-label="ズーム" />
          <svg width="9" height="9" stroke="#555" strokeWidth="2"><path d="M0 4.500h9M4.500 0v9" /></svg>
        </StatusField>
        <StatusField $width={40}>100%</StatusField>
      </StatusBar>

      <TaskBar>
        <TaskButton aria-label="スタート">
          <svg width="15" height="15" fill="#fff"><path d="M0 2l6-1v6H0zM7 1l8-1v7H7zM0 8h6v6l-6-1zM7 8h8v7l-8-1z" /></svg>
        </TaskButton>
        <SearchBox>
          <svg width="16" height="16" fill="none" stroke="#333" strokeWidth="1.300"><circle cx="10" cy="6" r="4.800" /><path d="M6.500 9.500L1 15" /></svg>
          <input aria-label="検索" placeholder="ここに入力して検索" />
        </SearchBox>
        <TaskButton aria-label="Cortana">
          <svg width="16" height="16" fill="none" stroke="#f4f4f4" strokeWidth="2.200"><circle cx="8" cy="8" r="5.500" /></svg>
        </TaskButton>
        <Running>
          <TaskButton $open aria-label="Steam">
            <svg width="20" height="20">
              <defs><linearGradient id="steam" x1="0" y1="0" x2="0" y2="1"><stop offset="0" stopColor="#10182c" /><stop offset="1" stopColor="#1f6fb0" /></linearGradient></defs>
              <circle cx="10" cy="10" r="9.500" fill="url(#steam)" />
              <circle cx="13" cy="7" r="3.200" fill="none" stroke="#fff" strokeWidth="1.500" />
              <path d="M1 9.500l6 2.500 3.500-4 4 3-4.500 3.500c0 3-5 3-5 0L.8 12.500z" fill="#e8eef4" />
            </svg>
          </TaskButton>
          <TaskButton $open $active aria-label="LibreOffice Calc"><CalcLogo size={21} /></TaskButton>
        </Running>
        <Tray>
          <Weather>
            <svg width="20" height="20">
              <path d="M5 13.500C-.5 13.500-.5 7 4 7c0-7 10-7 11-1.500 5.500 0 5.500 8 0 8z" fill="#cfe6f8" />
              <path d="M7 14c-3 4 1 5 1 2zM13 13c-3 4 1 5 1 2zM5 11l1 2" fill="#4a9fe0" />
            </svg>
            <span>22℃</span>
            <span>雨</span>
          </Weather>
          <TrayButton $width={22} aria-label="隠れているインジケーター">
            <svg width="12" height="8" fill="none" stroke="#eee" strokeWidth="1.300"><path d="M1 7l5-5 5 5" /></svg>
          </TrayButton>
          <TrayButton $width={22} aria-label="OneDrive">
            <svg width="15" height="10" fill="#f2f2f2"><path d="M3 9.500C-.5 9.500-.5 5 3 5c0-5 7-6 8-2 4.500 0 5 6.500 1 6.500z" /></svg>
          </TrayButton>
          <TrayButton $width={22} aria-label="ネットワーク">
            <svg width="14" height="14" fill="none" stroke="#ddd" strokeWidth="1.100"><path d="M1.500 12C2 6 6 2 12 1.500M4.500 12.500C5 8 8 5 12.500 4.500M7.500 12.500c.5-3 2-4.500 5-5" /><circle cx="11.500" cy="11.500" r="1.500" fill="#fff" /></svg>
          </TrayButton>
          <TrayButton $width={24} aria-label="入力モード">
            <svg width="12" height="14" fill="none" stroke="#fff"><path d="M5.500 1L2.500 12M6 1l3 11M3.500 8.500h5M1 12.500h4M7 12.500h4" strokeWidth="1.300" /></svg>
          </TrayButton>
          <TrayButton $width={24} aria-label="通知アプリ">
            <svg width="16" height="16"><circle cx="7" cy="7" r="6.500" fill="#1878d8" /><path d="M9 9l4-2 1.500 4L11 14z" fill="#e33022" /><circle cx="10" cy="12" r="2" fill="#f7d44a" /></svg>
          </TrayButton>
          <Clock><span>0:33</span><span>2021/07/01</span></Clock>
          <TrayButton $width={30} aria-label="アクション センター">
            <svg width="15" height="15" fill="#fff"><path d="M0 1h15v10H9.500l-2 3.500V11H0z" /><path d="M2.500 3.500h10M2.500 6h10M2.500 8.500h6" stroke="#1b2845" /></svg>
          </TrayButton>
          <ShowDesktop aria-label="デスクトップの表示" />
        </Tray>
      </TaskBar>
    </Window>
  );
}
